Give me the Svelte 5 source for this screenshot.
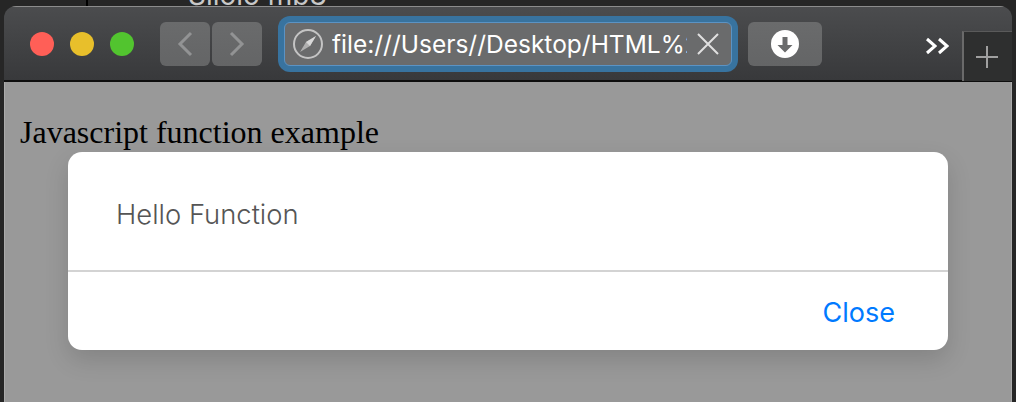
<script lang="ts">
  let message = 'Hello Function';
  let address = 'file:///Users//Desktop/HTML%2';
  const lights = ['#ff5f57', '#e8bf2b', '#52c42f'];
</script>

<div class="desktop">
  <div class="behind">
    <span class="behind-text">Siioio mb3</span>
  </div>

  <div class="window">
    <header class="toolbar">
      <div class="lights">
        {#each lights as color}
          <span class="light" style="background: {color}"></span>
        {/each}
      </div>

      <div class="nav">
        <button class="btn nav-btn" aria-label="Back">
          <svg width="16" height="26" viewBox="0 0 16 26"><path d="M14 2 3 13l11 11" /></svg>
        </button>
        <button class="btn nav-btn" aria-label="Forward">
          <svg width="16" height="26" viewBox="0 0 16 26"><path d="M2 2l11 11L2 24" /></svg>
        </button>
      </div>

      <div class="address">
        <svg class="compass" width="30" height="30" viewBox="0 0 30 30">
          <circle cx="15" cy="15" r="14" />
          <path class="needle" d="M23 7 17 17 7 23 13 13z" />
          <path class="needle-tip" d="M23 7 13 13 17 17z" />
        </svg>
        <span class="url">{address}</span>
        <svg class="clear" width="24" height="24" viewBox="0 0 24 24"><path d="M2 2l20 20M22 2 2 22" /></svg>
      </div>

      <button class="btn download" aria-label="Downloads">
        <svg width="28" height="28" viewBox="0 0 28 28">
          <circle cx="14" cy="14" r="14" fill="#fff" />
          <path d="M11.5 7h5v8h5L14 22.500 6.500 15h5z" fill="#6a6b6c" />
        </svg>
      </button>

      <svg class="more" width="24" height="18" viewBox="0 0 24 18"><path d="M2 2l8 7-8 7M14 2l8 7-8 7" /></svg>

      <div class="new-tab">
        <svg width="22" height="22" viewBox="0 0 22 22"><path d="M11 0v22M0 11h22" /></svg>
      </div>
    </header>

    <main class="page">
      <p class="heading">Javascript function example</p>

      <div class="modal">
        <div class="modal-body">{message}</div>
        <div class="modal-footer">
          <span class="close">Close</span>
        </div>
      </div>
    </main>
  </div>
</div>

<style>
  :global(body) {
    margin: 0;
    background: #262626;
    overflow: hidden;
  }

  .desktop {
    width: 1016px;
    height: 402px;
    padding: 0 4px;
    box-sizing: border-box;
    display: flex;
    flex-direction: column;
    overflow: hidden;
  }

  .behind {
    height: 6px;
    flex-shrink: 0;
    overflow: hidden;
    margin-left: 82px;
    padding-left: 100px;
    border-left: 2px solid #000;
  }

  .behind-text {
    display: block;
    margin-top: -19px;
    font-family: 'Inter', sans-serif;
    font-size: 28px;
    line-height: 28px;
    color: #c8c8c8;
    white-space: nowrap;
  }

  .window {
    flex: 1;
    display: flex;
    flex-direction: column;
    min-height: 0;
    border-radius: 12px 12px 0 0;
    overflow: hidden;
  }

  .toolbar {
    height: 76px;
    flex-shrink: 0;
    box-sizing: border-box;
    display: flex;
    align-items: flex-start;
    padding: 15px 0 0 26px;
    background: linear-gradient(#4b4c4e, #38393b);
    border-top: 1px solid #8c8c8c;
    border-bottom: 2px solid #0e0e0e;
  }

  .lights {
    display: flex;
    gap: 16px;
    margin-top: 10px;
  }

  .light {
    width: 24px;
    height: 24px;
    border-radius: 50%;
  }

  .nav {
    display: flex;
    gap: 2px;
    margin-left: 26px;
  }

  .btn {
    height: 44px;
    padding: 0;
    border: none;
    border-radius: 6px;
    background: linear-gradient(#6a6b6c, #646566);
    display: flex;
    align-items: center;
    justify-content: center;
  }

  .nav-btn {
    width: 50px;
  }

  .nav-btn path {
    fill: none;
    stroke: #929394;
    stroke-width: 3;
  }

  .address {
    width: 448px;
    height: 44px;
    margin-left: 22px;
    box-sizing: border-box;
    display: flex;
    align-items: center;
    padding: 0 11px 0 8px;
    border-radius: 6px;
    background: #6a6b6c;
    border: 1px solid #5b93c4;
    box-shadow: 0 0 0 6px #38739f;
  }

  .compass {
    flex-shrink: 0;
  }

  .compass circle {
    fill: none;
    stroke: #c4c4c4;
    stroke-width: 2;
  }

  .needle {
    fill: #b0b0b0;
  }

  .needle-tip {
    fill: #d8d8d8;
  }

  .url {
    flex: 1;
    min-width: 0;
    overflow: hidden;
    margin-left: 9px;
    margin-right: 9px;
    font-family: 'Inter', sans-serif;
    font-size: 24.5px;
    color: #fff;
    white-space: nowrap;
  }

  .clear {
    flex-shrink: 0;
  }

  .clear path {
    fill: none;
    stroke: #e0e0e0;
    stroke-width: 2;
  }

  .download {
    width: 74px;
    margin-left: 16px;
  }

  .more {
    margin: 15px 13px 0 auto;
  }

  .more path {
    fill: none;
    stroke: #fff;
    stroke-width: 3;
  }

  .new-tab {
    width: 50px;
    height: 50px;
    margin-top: 9px;
    box-sizing: border-box;
    display: flex;
    align-items: center;
    justify-content: center;
    background: #2e2f2f;
    border-left: 2px solid #6a6a6a;
    border-top: 1px solid #5a5a5a;
    padding-right: 2px;
  }

  .new-tab path {
    fill: none;
    stroke: #a0a0a0;
    stroke-width: 2;
  }

  .page {
    flex: 1;
    position: relative;
    background: #999;
    padding: 32px 15px 0;
    border-left: 1px solid #ababab;
    border-right: 1px solid #ababab;
  }

  .heading {
    margin: 0;
    font-family: 'Liberation Serif', 'Times New Roman', serif;
    font-size: 32px;
    line-height: 37px;
    color: #000;
    white-space: nowrap;
  }

  .modal {
    position: absolute;
    left: 63px;
    top: 70px;
    width: 880px;
    height: 198px;
    display: flex;
    flex-direction: column;
    background: #fff;
    border-radius: 14px;
    box-shadow: 0 10px 24px rgba(0, 0, 0, 0.14);
  }

  .modal-body {
    height: 120px;
    box-sizing: border-box;
    padding: 45px 48px 0;
    border-bottom: 2px solid #d3d3d3;
    font-family: 'Inter', sans-serif;
    font-size: 27.4px;
    font-weight: 300;
    line-height: 34px;
    color: #555;
  }

  .modal-footer {
    flex: 1;
    display: flex;
    align-items: center;
    justify-content: flex-end;
    padding: 2px 53px 0 0;
  }

  .close {
    font-family: 'Inter', sans-serif;
    font-size: 27px;
    color: #007aff;
  }
</style>
